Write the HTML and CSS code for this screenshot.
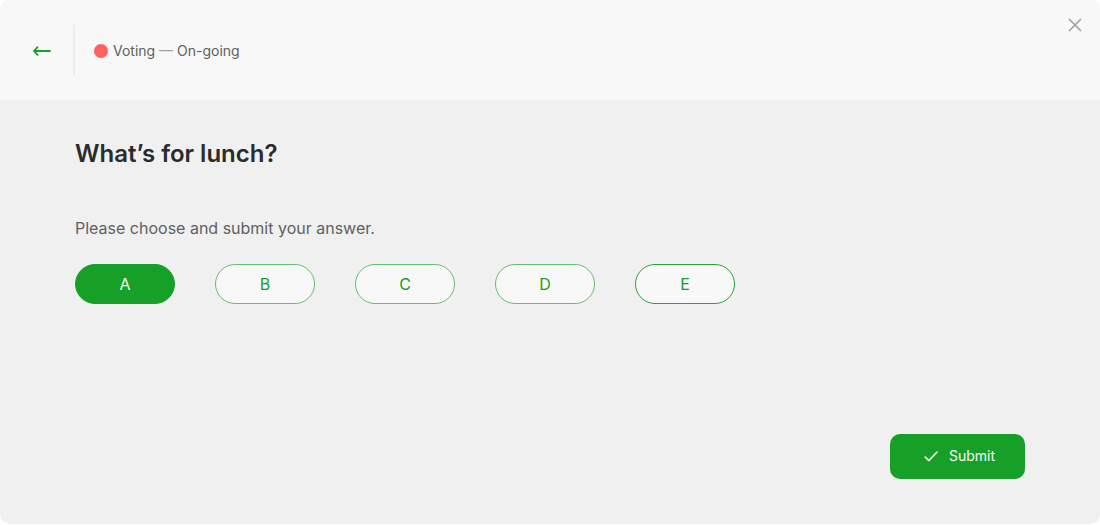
FILE: index.html
```html
<!DOCTYPE html>
<html lang="en">
<head>
<meta charset="utf-8">
<meta name="viewport" content="width=device-width, initial-scale=1">
<title>Voting</title>
<link rel="stylesheet" href="styles.css">
</head>
<body>
<div class="panel">
  <header class="header">
    <button class="icon-button back" type="button" aria-label="Back">
      <svg width="18" height="10" viewBox="0 0 18 10" fill="none" stroke="currentColor" stroke-width="1.8" stroke-linecap="round" stroke-linejoin="round"><path d="M17 5H1M4.500 1.200L1 5l3.500 3.800"/></svg>
    </button>
    <div class="status">
      <span class="dot"></span>
      <span>Voting <span class="dash">—</span> On-going</span>
    </div>
    <button class="icon-button close" type="button" aria-label="Close">
      <svg width="14" height="14" viewBox="0 0 14 14" fill="none" stroke="currentColor" stroke-width="1.700" stroke-linecap="round"><path d="M1.500 1.500l11 11M12.500 1.500l-11 11"/></svg>
    </button>
  </header>
  <form class="poll">
    <h1 class="question">What’s for lunch?</h1>
    <p class="hint" id="hint">Please choose and submit your answer.</p>
    <div class="options" role="radiogroup" aria-labelledby="hint">
      <label class="option"><input type="radio" name="answer" value="A" checked><span class="pill">A</span></label>
      <label class="option"><input type="radio" name="answer" value="B"><span class="pill">B</span></label>
      <label class="option"><input type="radio" name="answer" value="C"><span class="pill">C</span></label>
      <label class="option"><input type="radio" name="answer" value="D"><span class="pill">D</span></label>
      <label class="option"><input type="radio" name="answer" value="E"><span class="pill pill-strong">E</span></label>
    </div>
    <button class="submit" type="submit">
      <svg width="14" height="12" viewBox="0 0 14 12" fill="none" stroke="currentColor" stroke-width="1.600" stroke-linecap="round" stroke-linejoin="round"><path d="M1.200 7l3.600 3.600L13 2"/></svg>
      Submit
    </button>
  </form>
</div>
</body>
</html>
```

FILE: styles.css
```css
* {
  box-sizing: border-box;
}

body {
  margin: 0;
  background: #fff;
  color: #606060;
  font-family: Inter, "Liberation Sans", sans-serif;
}

button {
  border: 0;
  font: inherit;
  cursor: pointer;
}

svg {
  display: block;
}

.panel {
  overflow: hidden;
  border-radius: 10px;
  background: #f0f0f0;
}

.header {
  display: flex;
  align-items: center;
  padding: 25px 18px 24px 33px;
  background: #f8f8f8;
}

.icon-button {
  padding: 0;
  background: none;
}

.back {
  color: #16a028;
}

.close {
  align-self: flex-start;
  margin-left: auto;
  margin-top: -7px;
  color: #a0a0a0;
}

.status {
  display: flex;
  align-items: center;
  gap: 5px;
  height: 51px;
  margin-left: 22px;
  padding-left: 19px;
  border-left: 2px solid #ededed;
  font-size: 14px;
  line-height: 20px;
}

.dot {
  width: 14px;
  height: 14px;
  border-radius: 50%;
  background: #fc6262;
}

.dash {
  color: #a0a0a0;
}

.poll {
  display: flex;
  flex-direction: column;
  padding: 38px 75px 45px;
}

.question {
  margin: 0 0 47px;
  color: #2b2b2b;
  font-size: 24px;
  font-weight: 600;
  line-height: 32px;
}

.hint {
  margin: 0 0 25px;
  font-size: 16px;
  line-height: 22px;
}

.options {
  display: flex;
  flex-wrap: wrap;
  gap: 20px 40px;
}

.option {
  position: relative;
  width: 100px;
  cursor: pointer;
}

.option input {
  position: absolute;
  inset: 0;
  margin: 0;
  opacity: 0;
}

.pill {
  display: block;
  border: 1px solid #60c16c;
  border-radius: 20px;
  background: #f8f8f8;
  color: #16a028;
  font-size: 16px;
  line-height: 38px;
  text-align: center;
}

.pill-strong {
  border-color: #24a735;
}

.option input:checked + .pill {
  border-color: #16a028;
  background: #16a028;
  color: #f8f8f8;
}

.submit {
  display: flex;
  align-items: center;
  align-self: flex-end;
  gap: 11px;
  margin-top: 130px;
  padding: 12px 30px 13px 34px;
  border-radius: 10px;
  background: #16a028;
  color: #f8f8f8;
  font-size: 14px;
  line-height: 20px;
}
```
